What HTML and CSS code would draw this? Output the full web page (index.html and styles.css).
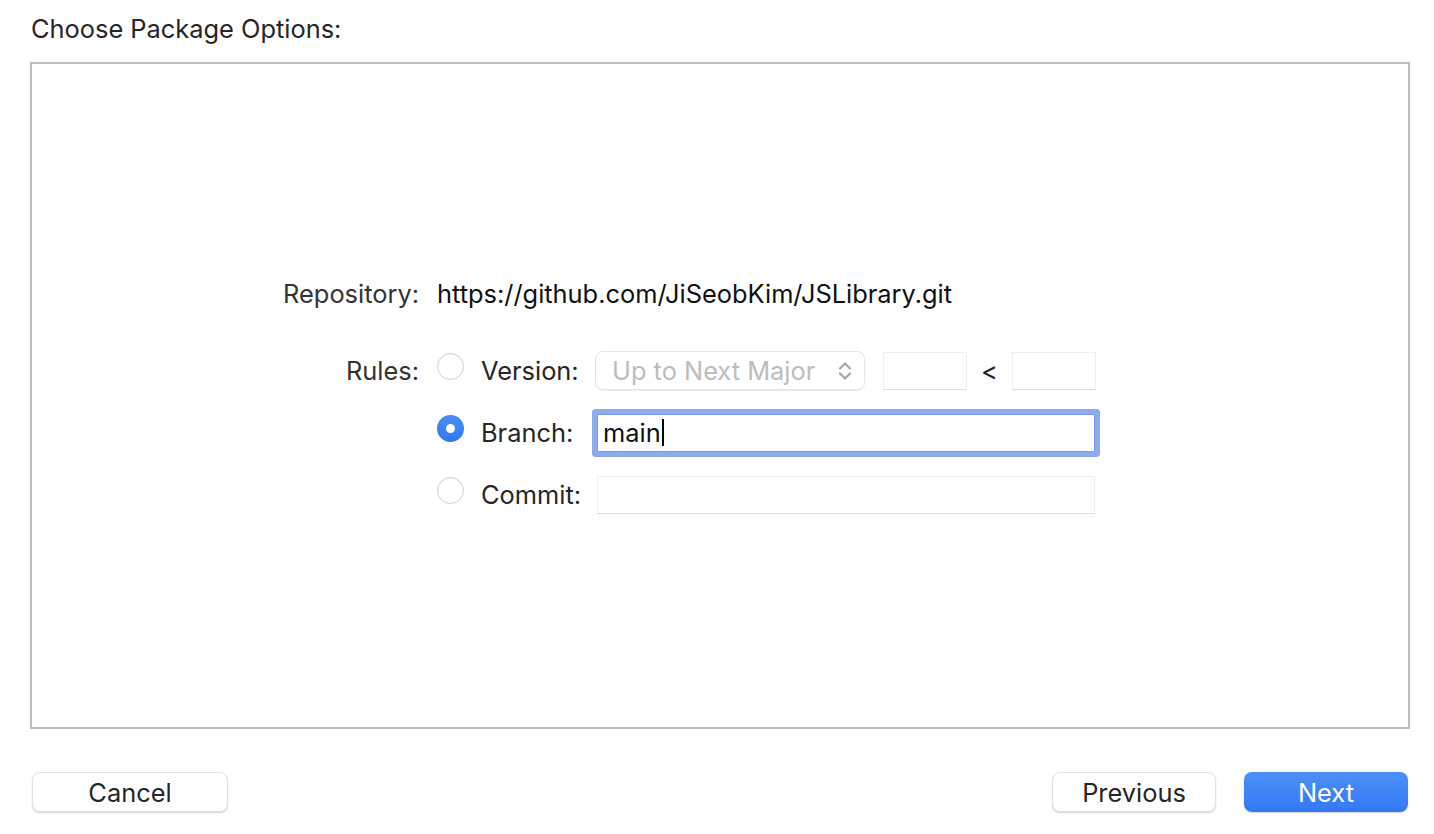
FILE: index.html
```html
<!DOCTYPE html>
<html>
<head>
<meta charset="utf-8">
<link rel="stylesheet" href="styles.css">
</head>
<body>
<div class="page">
  <div class="title">Choose Package Options:</div>
  <div class="panel">
    <div class="form">
      <div class="label repo-label">Repository:</div>
      <div class="repo-url">https://github.com/JiSeobKim/JSLibrary.git</div>

      <div class="label rules-label">Rules:</div>
      <div class="rules">
        <div class="rule">
          <span class="radio"></span>
          <span class="rule-label">Version:</span>
          <div class="controls">
            <div class="popup">
              <span class="popup-text">Up to Next Major</span>
              <svg class="chev" width="14" height="22" viewBox="0 0 14 22"><path d="M2 8.5 L7 3.5 L12 8.5 M2 13.5 L7 18.5 L12 13.5" fill="none" stroke="#a6a6a6" stroke-width="2.2" stroke-linecap="round" stroke-linejoin="round"/></svg>
            </div>
            <div class="field small first"></div>
            <span class="lt">&lt;</span>
            <div class="field small"></div>
          </div>
        </div>
        <div class="rule">
          <span class="radio on"></span>
          <span class="rule-label">Branch:</span>
          <div class="field wide focus"><span class="val">main</span><span class="caret"></span></div>
        </div>
        <div class="rule">
          <span class="radio"></span>
          <span class="rule-label">Commit:</span>
          <div class="field wide"></div>
        </div>
      </div>
    </div>
  </div>
  <div class="footer">
    <button class="btn cancel">Cancel</button>
    <div class="right-btns">
      <button class="btn prev">Previous</button>
      <button class="btn primary">Next</button>
    </div>
  </div>
</div>
</body>
</html>
```

FILE: styles.css
```css
* { box-sizing: border-box; }
html, body { margin: 0; padding: 0; background: #fff; }
body {
  font-family: Inter, "Liberation Sans", sans-serif;
  color: #262626;
  width: 1434px;
  height: 834px;
  overflow: hidden;
}
.page { display: flex; flex-direction: column; }
.title {
  font-size: 25.4px;
  line-height: 30px;
  padding: 14px 0 0 31px;
  height: 62px;
  color: #262626;
}
.panel {
  margin: 0 24px 0 30px;
  height: 667px;
  border: 2px solid #bdbdbd;
  display: flex;
  align-items: center;
  padding-left: 247px;
  padding-top: 2px;
}
.form {
  display: grid;
  grid-template-columns: 140px auto;
  column-gap: 18px;
  row-gap: 42px;
  align-items: start;
}
.label {
  text-align: right;
  font-size: 25.4px;
  color: #333;
}
.repo-label, .repo-url { line-height: 30px; }
.repo-url { font-size: 25.4px; color: #111; }
.rules-label { line-height: 40px; }
.rules { display: flex; flex-direction: column; gap: 22px; }
.rule {
  display: flex;
  align-items: center;
  height: 40px;
}
.radio {
  width: 27px;
  height: 27px;
  border-radius: 50%;
  border: 1px solid #cfcfcf;
  background: #fff;
  box-shadow: 0 1px 1px rgba(0,0,0,0.05) inset;
  margin-top: -8px;
  flex: none;
  position: relative;
}
.radio.on {
  border: none;
  background: linear-gradient(#4b8ef8, #2f77f5);
}
.radio.on::after {
  content: "";
  position: absolute;
  left: 9px;
  top: 9px;
  width: 9px;
  height: 9px;
  border-radius: 50%;
  background: #fff;
}
.rule-label {
  font-size: 25.4px;
  line-height: 30px;
  color: #262626;
  margin-left: 17px;
  width: 116px;
  flex: none;
}
.controls { display: flex; align-items: center; }
.popup {
  width: 270px;
  height: 39px;
  border: 1px solid #e4e4e4;
  border-radius: 8px;
  box-shadow: 0 1px 1px rgba(0,0,0,0.08);
  display: flex;
  align-items: center;
  justify-content: space-between;
  padding: 0 12px 0 16px;
  margin-left: -2px;
}
.popup-text { font-size: 25.4px; color: #bcbcbc; }
.field {
  height: 38px;
  background: #fff;
  border: 1px solid #f0f0f0;
  border-bottom-color: #dcdcdc;
}
.field.small { width: 84px; }
.field.first { margin-left: 18px; }
.lt { font-size: 25.4px; color: #222; width: 45px; text-align: center; }
.field.wide { width: 498px; }
.field.focus {
  border: 1px solid #7b9ae9;
  box-shadow: 0 0 0 5px #8fabf0;
  border-radius: 1px;
  display: flex;
  align-items: center;
  padding-left: 5px;
}
.val { font-size: 25.4px; color: #111; }
.caret { width: 2px; height: 27px; background: #000; margin-left: 1px; }
.footer {
  display: flex;
  justify-content: space-between;
  padding: 43px 26px 0 32px;
}
.right-btns { display: flex; gap: 28px; }
.btn {
  font-family: Inter, "Liberation Sans", sans-serif;
  font-size: 25.4px;
  height: 40px;
  border-radius: 8px;
  border: 1px solid #e2e2e2;
  background: #fff;
  color: #262626;
  box-shadow: 0 1px 1.5px rgba(0,0,0,0.18);
  padding: 0;
}
.cancel { width: 196px; }
.prev { width: 164px; }
.primary {
  width: 164px;
  border: none;
  color: #fff;
  background: linear-gradient(#4b90f8, #3478f6);
}
```
